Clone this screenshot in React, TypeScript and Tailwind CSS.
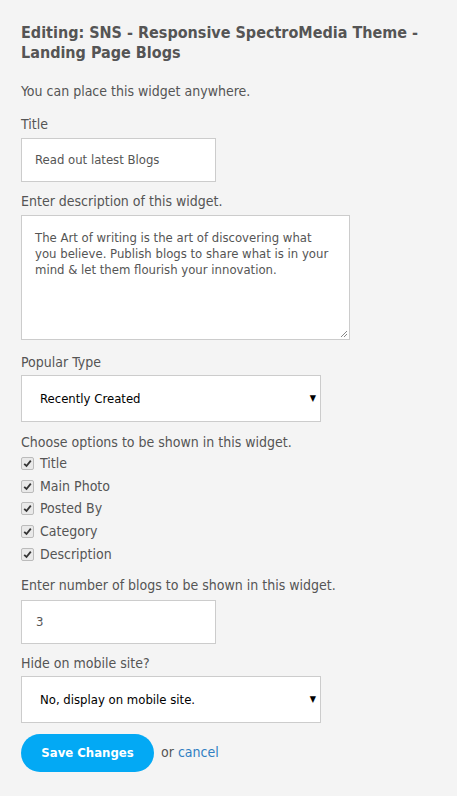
import React from "react";

const font = { fontFamily: "'DejaVu Sans Condensed', 'DejaVu Sans', sans-serif", fontStretch: "semi-condensed" as const };

function Check({ label }: { label: string }) {
  return (
    <label className="flex items-center h-[22.75px] gap-[6px]">
      <span className="w-[13px] h-[13px] rounded-[2px] border border-[#bbb] bg-[#e9e9e9] flex items-center justify-center">
        <svg width="9" height="9" viewBox="0 0 9 9">
          <path d="M1.2 4.8 L3.5 7 L7.8 1.6" stroke="#333" strokeWidth="1.8" fill="none" />
        </svg>
      </span>
      <span className="text-[14px] text-[#555]">{label}</span>
    </label>
  );
}

function Select({ value }: { value: string }) {
  return (
    <div className="w-[300px] h-[47px] bg-white border border-[#ccc] flex items-center justify-between pl-[18px] pr-[4px] text-[13px] text-black">
      <span>{value}</span>
      <span className="text-[9px] text-black">▼</span>
    </div>
  );
}

export default function App() {
  return (
    <div className="min-h-[796px] bg-[#f4f4f4] px-[21px] pt-[23px] text-[#555]" style={font}>
      <h1 className="text-[16px] font-bold leading-[20px] text-[#555]">
        Editing: SNS - Responsive SpectroMedia Theme - Landing Page Blogs
      </h1>
      <p className="mt-[18px] text-[14px] leading-[20px]">You can place this widget anywhere.</p>
      <div className="mt-[13px] text-[14px] leading-[20px]">Title</div>
      <div className="mt-[4px] w-[195px] h-[44px] bg-white border border-[#ccc] flex items-center pl-[13px] text-[13px]">
        Read out latest Blogs
      </div>
      <div className="mt-[9px] text-[14px] leading-[20px]">Enter description of this widget.</div>
      <div className="relative mt-[4px] w-[329px] h-[125px] bg-white border border-[#ccc] px-[13px] pt-[14px] text-[13px] leading-[16px]">
        The Art of writing is the art of discovering what you believe. Publish blogs to share what is in your mind &amp; let them flourish your innovation.
        <svg className="absolute right-[1px] bottom-[1px]" width="9" height="9" viewBox="0 0 9 9">
          <path d="M8 2 L2 8 M8 5 L5 8" stroke="#888" strokeWidth="1" />
        </svg>
      </div>
      <div className="mt-[12px] text-[14px] leading-[20px]">Popular Type</div>
      <div className="mt-[3px]"><Select value="Recently Created" /></div>
      <div className="mt-[10px] text-[14px] leading-[20px]">Choose options to be shown in this widget.</div>
      <div className="flex flex-col">
        <Check label="Title" />
        <Check label="Main Photo" />
        <Check label="Posted By" />
        <Check label="Category" />
        <Check label="Description" />
      </div>
      <div className="mt-[9px] text-[14px] leading-[20px]">Enter number of blogs to be shown in this widget.</div>
      <div className="mt-[5px] w-[195px] h-[44px] bg-white border border-[#ccc] flex items-center pl-[14px] text-[13px]">3</div>
      <div className="mt-[9px] text-[14px] leading-[20px]">Hide on mobile site?</div>
      <div className="mt-[3px]"><Select value="No, display on mobile site." /></div>
      <div className="mt-[11px] flex items-center gap-[7px]">
        <button className="w-[133px] h-[38px] rounded-full bg-[#03a9f4] text-white font-bold text-[13px]">Save Changes</button>
        <span className="text-[14px]">or <span className="text-[#2f7ec2]">cancel</span></span>
      </div>
    </div>
  );
}
